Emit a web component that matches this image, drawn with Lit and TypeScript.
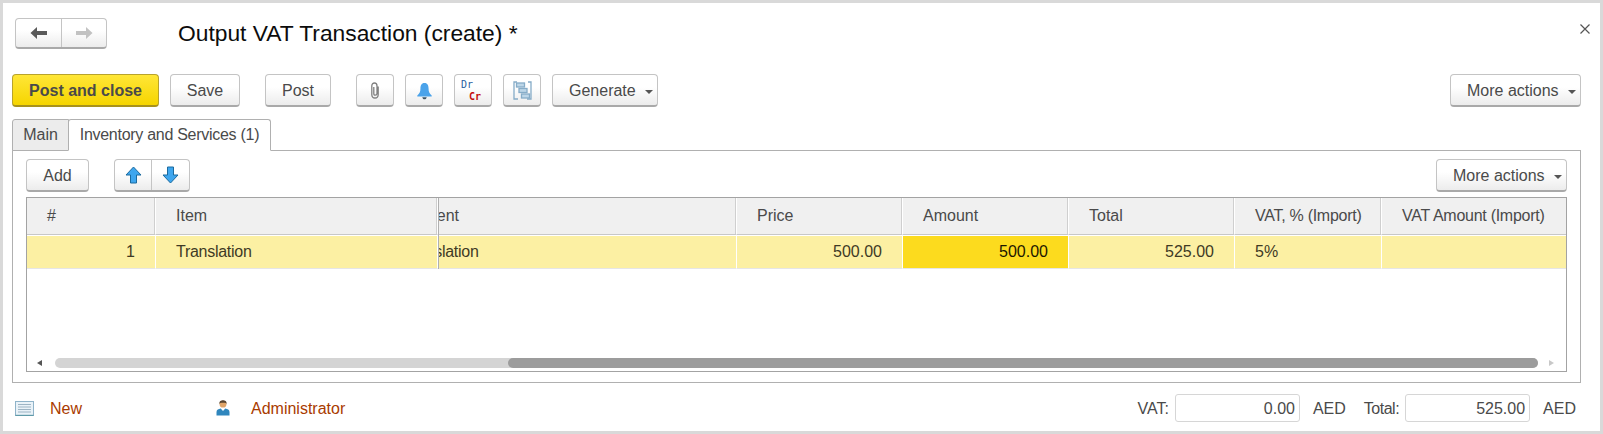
import { LitElement, html, css, svg } from "lit";
import { customElement } from "lit/decorators.js";

const arrowL = (c: string) => svg`<svg width="18" height="14" viewBox="0 0 18 14"><path d="M0.5 7 L7 1 V5 H17 V9 H7 V13 Z" fill="${c}"/></svg>`;
const arrowR = (c: string) => svg`<svg width="18" height="14" viewBox="0 0 18 14"><path d="M17.5 7 L11 1 V5 H1 V9 H11 V13 Z" fill="${c}"/></svg>`;
const arrowU = svg`<svg width="17" height="18" viewBox="0 0 17 18"><path d="M8.5 1 L16 9 H11.5 V17 H5.5 V9 H1 Z" fill="#3ea6ee" stroke="#1b6a9e" stroke-width="1" stroke-linejoin="round"/></svg>`;
const arrowD = svg`<svg width="17" height="18" viewBox="0 0 17 18"><path d="M8.5 17 L16 9 H11.5 V1 H5.5 V9 H1 Z" fill="#3ea6ee" stroke="#1b6a9e" stroke-width="1" stroke-linejoin="round"/></svg>`;
const clip = svg`<svg width="10" height="17" viewBox="0 0 10 17"><path d="M8.2 4.5 V12.5 C8.2 14.8 6.8 16 5 16 C3.2 16 1.8 14.8 1.8 12.5 V4 C1.8 2 2.9 1 4.5 1 C6 1 7 2 7 4 V11.5 C7 12.8 6.2 13.2 5.2 13.2 C4.2 13.2 3.8 12.6 3.8 11.5 V5" fill="none" stroke="#808080" stroke-width="1.3"/></svg>`;
const bell = svg`<svg width="17" height="18" viewBox="0 0 18 20"><path d="M9 1 C5.5 1 4.5 4 4.5 7 C4.5 11 3.5 13 1 15 V16 H17 V15 C14.5 13 13.5 11 13.5 7 C13.5 4 12.5 1 9 1 Z" fill="#4ba3ea"/><path d="M6.5 17 H11.5 C11 18.8 10 19.3 9 19.3 C8 19.3 7 18.8 6.5 17 Z" fill="#3d5466"/></svg>`;
const struct = svg`<svg width="19" height="19" viewBox="0 0 19 19" fill="#bdd6e8" stroke="#86acc8" stroke-width="1.3"><path d="M4 1 H1 V18 H5" fill="none"/><path d="M15 1 H18 V18 H14" fill="none"/><rect x="3.5" y="2" width="8" height="4"/><rect x="6" y="7.5" width="8" height="4"/><rect x="8.5" y="13" width="8" height="4"/></svg>`;
const doc = svg`<svg width="19" height="15" viewBox="0 0 19 15"><rect x="0.5" y="0.5" width="18" height="14" fill="#e9f2f8" stroke="#8fb3c9"/><path d="M3 3.5 H16 M3 6 H16 M3 8.5 H16 M3 11 H16" stroke="#9db4c4" stroke-width="1"/><path d="M0.5 14.5 H18.5" stroke="#5f9aa8" stroke-width="1.4"/></svg>`;
const person = svg`<svg width="14" height="16" viewBox="0 0 14 16"><circle cx="7" cy="4.2" r="3.4" fill="#e0a468"/><path d="M3.3 4 C3.3 1 5 0.2 7 0.2 C9 0.2 10.7 1 10.7 4 L9.8 3 C8 2.6 6 2.6 4.2 3 Z" fill="#5a4632"/><path d="M0.5 15.5 V12 C0.5 10 2.5 9 4.7 8.6 L7 11 L9.3 8.6 C11.5 9 13.5 10 13.5 12 V15.5 Z" fill="#2f86bd"/></svg>`;

@customElement("app-root")
export class AppRoot extends LitElement {
  static styles = css`
    :host { display: block; font-family: "Liberation Sans", Arial, sans-serif; font-size: 16px; color: #4a4a4a; }
    .frame { box-sizing: border-box; width: 1603px; height: 434px; border: 3px solid #d9d9d9; background: #fff; display: flex; flex-direction: column; }

    .head { display: flex; align-items: center; height: 30px; margin-top: 15px; padding-left: 12px; padding-right: 9px; }
    .title { margin-left: 71px; font-size: 22.8px; color: #0c0c0c; line-height: 30px; }
    .close { margin-left: auto; width: 12px; height: 12px; margin-top: -8px; }

    .btn { box-sizing: border-box; display: inline-flex; align-items: center; justify-content: center; height: 33px; padding-top: 1px; background: linear-gradient(#fff 0%, #fff 40%, #ececec 100%); border: 1px solid #c4c4c4; border-bottom: 2px solid #a9a9a9; border-radius: 4px; color: #4a4a4a; flex: none; }
    .primary { background: linear-gradient(#ffe637, #f6d500); border-color: #b8a32c; border-bottom-color: #a8921c; font-weight: bold; width: 147px; }
    .group { display: inline-flex; padding: 0; }
    .group > span { display: flex; align-items: center; justify-content: center; height: 100%; }
    .group > span + span { border-left: 1px solid #c4c4c4; }

    .nav { width: 92px; height: 31px; }
    .nav > span:first-child { width: 45px; }
    .nav > span:last-child { flex: 1; }
    .updown { width: 76px; margin-left: 25px; }
    .updown > span:first-child { width: 36px; }
    .updown > span:last-child { flex: 1; }

    .bar { display: flex; align-items: center; margin-top: 26px; padding-left: 9px; padding-right: 19px; height: 33px; }
    .save { width: 70px; margin-left: 11px; }
    .post { width: 66px; margin-left: 25px; }
    .ic { width: 38px; margin-left: 11px; }
    .ic.first { margin-left: 25px; }
    .gen { width: 106px; margin-left: 11px; justify-content: flex-start; padding-left: 16px; }
    .more { width: 131px; margin-left: auto; justify-content: flex-start; padding-left: 16px; }
    .caret { width: 0; height: 0; border-left: 4px solid transparent; border-right: 4px solid transparent; border-top: 4px solid #555; margin-left: 9px; margin-top: 2px; }
    .drcr { width: 24px; display: flex; flex-direction: column; font-family: "DejaVu Sans Mono", monospace; font-size: 10px; line-height: 12px; }
    .dr { color: #1f5f9e; }
    .cr { color: #c40f0f; font-weight: bold; margin-left: 8px; }

    .tabs { display: flex; margin-top: 12px; padding-left: 9px; height: 32px; position: relative; z-index: 1; margin-bottom: -1px; }
    .tab { box-sizing: border-box; border: 1px solid #b0b0b0; display: flex; align-items: center; justify-content: center; }
    .tab.off { width: 57px; background: #ececec; border-radius: 3px 0 0 0; }
    .tab.on { width: 203px; margin-left: -1px; background: #fff; border-bottom-color: #fff; border-radius: 3px 3px 0 0; letter-spacing: -0.28px; }

    .panel { box-sizing: border-box; margin: 0 19px 0 9px; height: 233px; border: 1px solid #b0b0b0; padding: 8px 13px 10px; display: flex; flex-direction: column; }
    .tools { display: flex; align-items: center; }
    .add { width: 63px; }

    .table { box-sizing: border-box; margin-top: 5px; flex: 1; border: 1px solid #a3a3a3; display: flex; flex-direction: column; min-height: 0; }
    .panes { display: flex; }
    .frozen { flex: none; width: 411px; border-right: 1px solid #b0b0b0; overflow: hidden; }
    .scroll { flex: 1; overflow: hidden; min-width: 0; }
    .cols { display: grid; grid-template-rows: 37px 34px; }
    .frozen .cols { grid-template-columns: 129px 282px; }
    .scroll .cols { width: 1185px; margin-left: -56px; grid-template-columns: 354px 166px 166px 166px 147px 186px; }
    .h, .c { box-sizing: border-box; white-space: nowrap; overflow: hidden; display: flex; align-items: center; padding: 0 20px; }
    .h { background: #f0f0f0; border-right: 1px solid #fff; box-shadow: inset -1px 0 #cfcfcf; border-bottom: 1px solid #c8c8c8; height: 37px; }
    .c { background: #fcf0a3; border-right: 1px solid #fff; border-top: 1px solid #fff; border-bottom: 1px solid #e6e6e6; height: 34px; color: #3f3a25; }
    .tight { letter-spacing: -0.27px; }
    .r { justify-content: flex-end; }
    .cur { background: #fcdb1e; color: #1c1700; }
    .sp { flex: 1; }
    .sb { display: flex; align-items: center; height: 10px; margin-bottom: 3px; padding-left: 10px; }
    .tl { width: 0; height: 0; border-top: 3px solid transparent; border-bottom: 3px solid transparent; border-right: 5px solid #555; }
    .tr { width: 0; height: 0; border-top: 3px solid transparent; border-bottom: 3px solid transparent; border-left: 5px solid #c8c8c8; margin-left: 11px; }
    .track { margin-left: 13px; width: 1483px; height: 10px; border-radius: 5px; background: #d4d4d4; display: flex; }
    .thumb { margin-left: 453px; flex: 1; border-radius: 5px; background: #9c9c9c; }

    .foot { display: flex; align-items: center; margin-top: 11px; padding-left: 12px; height: 28px; padding-right: 24px; }
    .foot .t, .inp { padding-top: 2px; }
    .link { color: #a93b00; }
    .new { margin-left: 16px; }
    .person { margin-left: 134px; display: flex; }
    .admin { margin-left: 21px; }
    .vat { margin-left: auto; }
    .inp { box-sizing: border-box; width: 125px; height: 28px; margin-left: 6px; border: 1px solid #d6d6d6; border-radius: 3px; display: flex; align-items: center; justify-content: flex-end; padding-right: 4px; }
    .aed { margin-left: 13px; }
    .tot { margin-left: 18px; letter-spacing: -0.5px; }
    svg { display: block; }
  `;

  render() {
    return html`<div class="frame">
      <div class="head">
        <div class="btn group nav"><span>${arrowL("#5a5a5a")}</span><span>${arrowR("#c2c2c2")}</span></div>
        <div class="title">Output VAT Transaction (create) *</div>
        <div class="close"><svg width="12" height="12" viewBox="0 0 12 12"><path d="M1.5 1.5 L10.5 10.5 M10.5 1.5 L1.5 10.5" stroke="#555" stroke-width="1.2"/></svg></div>
      </div>
      <div class="bar">
        <div class="btn primary">Post and close</div>
        <div class="btn save">Save</div>
        <div class="btn post">Post</div>
        <div class="btn ic first">${clip}</div>
        <div class="btn ic">${bell}</div>
        <div class="btn ic"><div class="drcr"><span class="dr">Dr</span><span class="cr">Cr</span></div></div>
        <div class="btn ic">${struct}</div>
        <div class="btn gen">Generate<span class="caret"></span></div>
        <div class="btn more">More actions<span class="caret"></span></div>
      </div>
      <div class="tabs">
        <div class="tab off">Main</div>
        <div class="tab on">Inventory and Services (1)</div>
      </div>
      <div class="panel">
        <div class="tools">
          <div class="btn add">Add</div>
          <div class="btn group updown"><span>${arrowU}</span><span>${arrowD}</span></div>
          <div class="btn more">More actions<span class="caret"></span></div>
        </div>
        <div class="table">
          <div class="panes">
            <div class="frozen"><div class="cols">
              <div class="h">#</div><div class="h">Item</div>
              <div class="c r">1</div><div class="c tight">Translation</div>
            </div></div>
            <div class="scroll"><div class="cols">
              <div class="h">Content</div><div class="h">Price</div><div class="h">Amount</div><div class="h">Total</div><div class="h tight">VAT, % (Import)</div><div class="h tight">VAT Amount (Import)</div>
              <div class="c tight">Translation</div><div class="c r">500.00</div><div class="c r cur">500.00</div><div class="c r">525.00</div><div class="c">5%</div><div class="c"></div>
            </div></div>
          </div>
          <div class="sp"></div>
          <div class="sb"><span class="tl"></span><div class="track"><div class="thumb"></div></div><span class="tr"></span></div>
        </div>
      </div>
      <div class="foot">
        ${doc}<span class="t link new">New</span>
        <span class="person">${person}</span><span class="t link admin">Administrator</span>
        <span class="t vat">VAT:</span><div class="inp">0.00</div><span class="t aed">AED</span>
        <span class="t tot">Total:</span><div class="inp">525.00</div><span class="t aed">AED</span>
      </div>
    </div>`;
  }
}
